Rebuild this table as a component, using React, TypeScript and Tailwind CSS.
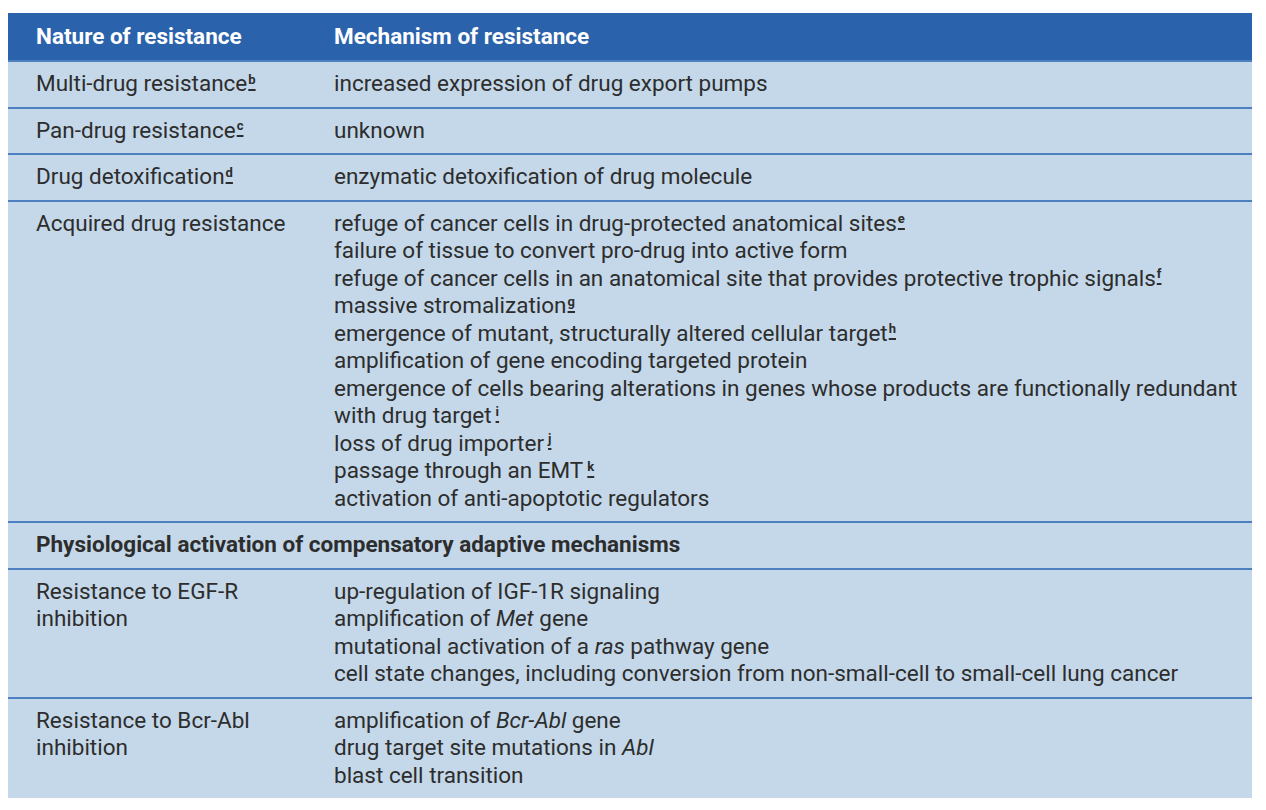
import React from 'react';

const Note: React.FC<{ l: string; gap?: boolean }> = ({ l, gap }) => (
  <sup
    className={`${gap ? 'ml-[4px]' : 'ml-[1px]'} text-[13px] font-bold underline decoration-2 underline-offset-[5px] top-[-0.55em]`}
  >
    {l}
  </sup>
);

type Row = {
  nature: React.ReactNode;
  mech: React.ReactNode[];
};

const rows: Row[] = [
  { nature: <>Multi-drug resistance<Note l="b" /></>, mech: ['increased expression of drug export pumps'] },
  { nature: <>Pan-drug resistance<Note l="c" /></>, mech: ['unknown'] },
  { nature: <>Drug detoxification<Note l="d" /></>, mech: ['enzymatic detoxification of drug molecule'] },
  {
    nature: 'Acquired drug resistance',
    mech: [
      <>refuge of cancer cells in drug-protected anatomical sites<Note l="e" /></>,
      'failure of tissue to convert pro-drug into active form',
      <>refuge of cancer cells in an anatomical site that provides protective trophic signals<Note l="f" /></>,
      <>massive stromalization<Note l="g" /></>,
      <>emergence of mutant, structurally altered cellular target<Note l="h" /></>,
      'amplification of gene encoding targeted protein',
      'emergence of cells bearing alterations in genes whose products are functionally redundant',
      <>with drug target<Note l="i" gap /></>,
      <>loss of drug importer<Note l="j" gap /></>,
      <>passage through an EMT<Note l="k" gap /></>,
      'activation of anti-apoptotic regulators',
    ],
  },
];

const rows2: Row[] = [
  {
    nature: <>Resistance to EGF-R<br />inhibition</>,
    mech: [
      'up-regulation of IGF-1R signaling',
      <>amplification of <i>Met</i> gene</>,
      <>mutational activation of a <i>ras</i> pathway gene</>,
      'cell state changes, including conversion from non-small-cell to small-cell lung cancer',
    ],
  },
  {
    nature: <>Resistance to Bcr-Abl<br />inhibition</>,
    mech: [
      <>amplification of <i>Bcr-Abl</i> gene</>,
      <>drug target site mutations in <i>Abl</i></>,
      'blast cell transition',
    ],
  },
];

const TableRow: React.FC<{ row: Row }> = ({ row }) => (
  <div className="grid grid-cols-[298px_1fr] border-t-2 border-[#4c80c0] pl-[28px] pt-[8px] pb-[9px]">
    <div>{row.nature}</div>
    <div>
      {row.mech.map((m, i) => (
        <div key={i} className="whitespace-nowrap">{m}</div>
      ))}
    </div>
  </div>
);

export default function App() {
  return (
    <div className="min-h-screen bg-white pt-[13px] pl-[8px]" style={{ fontFamily: 'Roboto, "Liberation Sans", sans-serif' }}>
      <div className="w-[1244px] bg-[#c4d8e9] text-[22.5px] leading-[27.5px] text-[#2d2d2d]">
        <div className="grid grid-cols-[298px_1fr] bg-[#2a62ab] pl-[28px] h-[47px] items-center font-bold text-white">
          <div>Nature of resistance</div>
          <div>Mechanism of resistance</div>
        </div>
        {rows.map((r, i) => (
          <TableRow key={i} row={r} />
        ))}
        <div className="border-t-2 border-[#4c80c0] pl-[28px] pt-[8px] pb-[9px] font-bold">
          Physiological activation of compensatory adaptive mechanisms
        </div>
        {rows2.map((r, i) => (
          <TableRow key={i} row={r} />
        ))}
      </div>
    </div>
  );
}
